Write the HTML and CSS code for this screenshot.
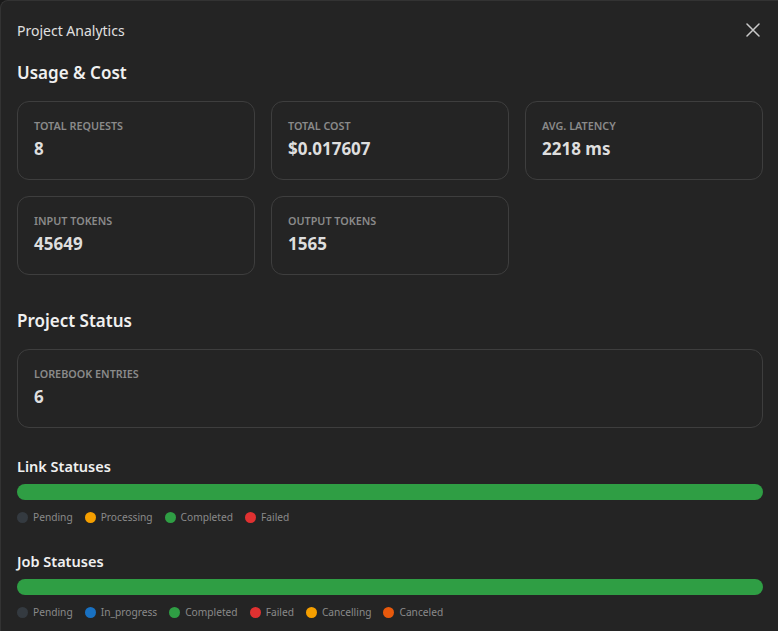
FILE: index.html
```html
<!DOCTYPE html>
<html>
<head>
<meta charset="utf-8">
<link rel="stylesheet" href="styles.css">
</head>
<body>
<div class="dialog">
  <div class="header">
    <div class="title">Project Analytics</div>
    <button class="close" aria-label="Close">
      <svg width="14" height="14" viewBox="0 0 14 14"><path d="M1 1L13 13M13 1L1 13" stroke="#c9c9c9" stroke-width="1.5" fill="none" stroke-linecap="round"/></svg>
    </button>
  </div>

  <h2 class="section">Usage &amp; Cost</h2>
  <div class="grid">
    <div class="card"><div class="label">Total Requests</div><div class="value">8</div></div>
    <div class="card"><div class="label">Total Cost</div><div class="value">$0.017607</div></div>
    <div class="card"><div class="label">Avg. Latency</div><div class="value">2218 ms</div></div>
    <div class="card"><div class="label">Input Tokens</div><div class="value">45649</div></div>
    <div class="card"><div class="label">Output Tokens</div><div class="value">1565</div></div>
  </div>

  <h2 class="section section-2">Project Status</h2>
  <div class="card"><div class="label">Lorebook Entries</div><div class="value">6</div></div>

  <h3 class="sub">Link Statuses</h3>
  <div class="bar"><div class="fill" style="width:100%"></div></div>
  <div class="legend">
    <span class="item"><i class="dot pending"></i>Pending</span>
    <span class="item"><i class="dot processing"></i>Processing</span>
    <span class="item"><i class="dot completed"></i>Completed</span>
    <span class="item"><i class="dot failed"></i>Failed</span>
  </div>

  <h3 class="sub sub-next">Job Statuses</h3>
  <div class="bar"><div class="fill" style="width:100%"></div></div>
  <div class="legend">
    <span class="item"><i class="dot pending"></i>Pending</span>
    <span class="item"><i class="dot progress"></i>In_progress</span>
    <span class="item"><i class="dot completed"></i>Completed</span>
    <span class="item"><i class="dot failed"></i>Failed</span>
    <span class="item"><i class="dot processing"></i>Cancelling</span>
    <span class="item"><i class="dot canceled"></i>Canceled</span>
  </div>
</div>
</body>
</html>
```

FILE: styles.css
```css
html, body {
  margin: 0;
  padding: 0;
  background: #1a1a1a;
  height: 100%;
  overflow: hidden;
}
body {
  font-family: "Noto Sans", "Open Sans", sans-serif;
  color: #c9c9c9;
}
.dialog {
  background: #242424;
  border-left: 1px solid #333;
  border-top: 1px solid #333;
  border-top-left-radius: 8px;
  padding: 0 15px 20px 16px;
  min-height: 100%;
  box-sizing: border-box;
}
.header {
  display: flex;
  align-items: center;
  justify-content: space-between;
  height: 58px;
}
.title {
  font-size: 14px;
  color: #e0e0e0;
}
.close {
  background: none;
  border: 0;
  padding: 0;
  width: 24px;
  height: 24px;
  display: flex;
  align-items: center;
  justify-content: center;
  margin-right: -2px;
  cursor: pointer;
}
.section {
  margin: 0 0 14px;
  font-size: 17px;
  font-weight: 600;
  color: #f0f0f0;
  line-height: 28px;
}
.section-2 {
  margin-top: 32px;
}
.grid {
  display: grid;
  grid-template-columns: repeat(3, 1fr);
  gap: 16px;
}
.card {
  border: 1px solid #3e3e3e;
  border-radius: 12px;
  padding: 16px 16px 18px;
  height: 79px;
  box-sizing: border-box;
}
.label {
  font-size: 10.8px;
  font-weight: 600;
  text-transform: uppercase;
  color: #8a8a8a;
  line-height: 16px;
}
.value {
  font-size: 17px;
  font-weight: 700;
  color: #dedede;
  line-height: 24px;
  margin-top: 3px;
}
.sub {
  margin: 27px 0 7px;
  font-size: 14.5px;
  font-weight: 600;
  color: #f0f0f0;
  line-height: 22px;
}
.sub-next {
  margin-top: 25px;
}
.bar {
  height: 16px;
  border-radius: 8px;
  background: #2e2e2e;
  overflow: hidden;
}
.fill {
  height: 100%;
  background: #2f9e44;
}
.legend {
  display: flex;
  gap: 12px;
  margin-top: 9px;
  font-size: 10.2px;
  color: #8a8a8a;
  line-height: 16px;
}
.item {
  display: flex;
  align-items: center;
  gap: 5px;
}
.dot {
  width: 11px;
  height: 11px;
  border-radius: 50%;
  display: inline-block;
}
.pending { background: #343a40; }
.processing { background: #f59f00; }
.completed { background: #2f9e44; }
.failed { background: #e03131; }
.progress { background: #1971c2; }
.canceled { background: #e8590c; }
```
